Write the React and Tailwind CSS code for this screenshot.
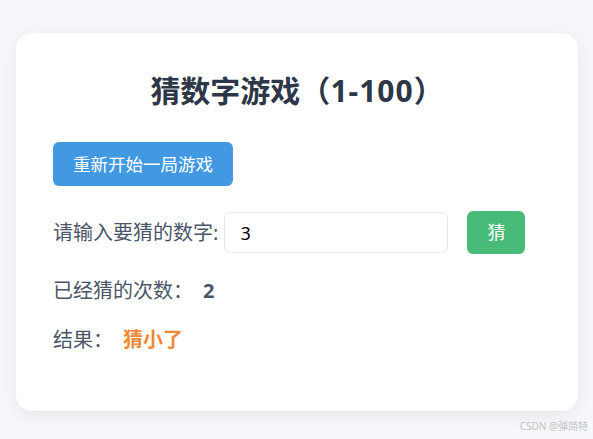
import { useState } from "react";

export default function App() {
  const [guess, setGuess] = useState("3");
  const [count] = useState(2);
  const [result] = useState("猜小了");

  return (
    <div
      className="relative min-h-[439px] bg-[#f5f7fa] pt-[33px] pl-[16px] pr-[15px]"
      style={{ fontFamily: '"Noto Sans", "Noto Sans CJK SC", sans-serif' }}
    >
      <div className="h-[378px] rounded-[16px] bg-white px-[37px] pt-[40px] shadow-[0_4px_18px_rgba(0,0,0,0.07)]">
        <h1 className="text-center text-[30px] font-bold leading-[36px] text-[#2d3748]">
          猜数字游戏（<span className="tracking-[1px]">1-100</span>）
        </h1>

        <button className="mt-[33px] h-[44px] rounded-[6px] bg-[#4299e1] px-[20px] text-[17.5px] text-white">
          重新开始一局游戏
        </button>

        <div className="mt-[25px] flex h-[43px] items-center">
          <label className="text-[20px] text-[#4a5568]">请输入要猜的数字:</label>
          <input
            className="ml-[6px] h-[41px] w-[224px] rounded-[6px] border border-[#e2e8f0] px-[15px] text-[18px] text-black outline-none"
            value={guess}
            onChange={(e) => setGuess(e.target.value)}
          />
          <button className="ml-[19px] h-[43px] w-[58px] rounded-[6px] bg-[#48bb78] text-[18px] text-white">
            猜
          </button>
        </div>

        <div className="mt-[22px] flex items-center text-[20px] leading-[30px] text-[#4a5568]">
          <span>已经猜的次数：</span>
          <span className="ml-[10px] font-bold">{count}</span>
        </div>

        <div className="mt-[19px] flex items-center text-[20px] leading-[30px] text-[#4a5568]">
          <span>结果：</span>
          <span className="ml-[10px] font-bold text-[#ed8936]">{result}</span>
        </div>
      </div>

      <div className="absolute bottom-[5px] right-[5px] text-[10px] text-[#c4c4c4]">
        CSDN @弹简特
      </div>
    </div>
  );
}
